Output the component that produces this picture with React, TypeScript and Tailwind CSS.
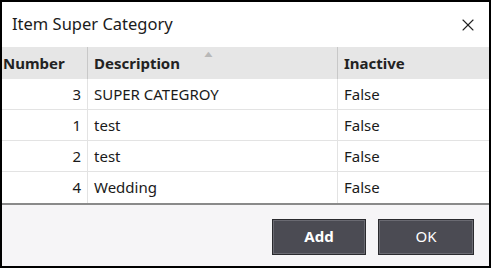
import { X } from "lucide-react";

const rows = [
  { num: 3, desc: "SUPER CATEGROY", inactive: "False" },
  { num: 1, desc: "test", inactive: "False" },
  { num: 2, desc: "test", inactive: "False" },
  { num: 4, desc: "Wedding", inactive: "False" },
];

export default function App() {
  return (
    <div className="w-[491px] h-[268px] bg-black p-[2px] font-['Noto_Sans','Open_Sans',sans-serif] text-[#1a1a1a]">
      <div className="flex h-full flex-col bg-white">
        {/* title bar */}
        <div className="flex h-[45px] items-center justify-between pl-[10px] pr-[11px]">
          <span className="text-[16.5px] text-[#1b1b1b]">Item Super Category</span>
          <X className="h-[20px] w-[20px] text-[#222]" strokeWidth={1.3} />
        </div>

        {/* grid */}
        <div className="flex flex-col border-b-2 border-[#8a8a8a]">
          <div className="flex h-[32px] bg-[#e6e6e6] text-[15px] font-bold text-[#222]">
            <div className="flex w-[86px] items-center border-r border-[#c8c8c8] pl-[1px]">Number</div>
            <div className="relative flex w-[250px] items-center border-r border-[#c8c8c8] pl-[6px]">
              Description
              <span className="absolute left-[116px] top-[0px] text-[9px] font-normal text-[#b8b8b8] scale-x-150">▲</span>
            </div>
            <div className="flex flex-1 items-center pl-[6px]">Inactive</div>
          </div>
          {rows.map((r, i) => (
            <div key={i} className="flex h-[31px] border-b border-[#e3e3e3] text-[15px] last:border-b-0">
              <div className="flex w-[86px] items-center justify-end border-r border-[#e3e3e3] pr-[6px]">{r.num}</div>
              <div className="flex w-[250px] items-center border-r border-[#e3e3e3] pl-[6px]">{r.desc}</div>
              <div className="flex flex-1 items-center pl-[6px]">{r.inactive}</div>
            </div>
          ))}
        </div>

        {/* footer */}
        <div className="flex flex-1 items-center justify-end gap-[12px] bg-[#f6f5f7] pr-[15px] pt-[2px]">
          <button className="h-[36px] w-[94px] border border-[#2a2a2e] bg-[#4b4b53] text-[15px] font-bold text-white shadow-[inset_0_0_0_1px_#6a6a72]">
            Add
          </button>
          <button className="h-[36px] w-[96px] border border-[#2a2a2e] bg-[#4b4b53] text-[15px] text-white shadow-[inset_0_0_0_1px_#6a6a72]">
            OK
          </button>
        </div>
      </div>
    </div>
  );
}
